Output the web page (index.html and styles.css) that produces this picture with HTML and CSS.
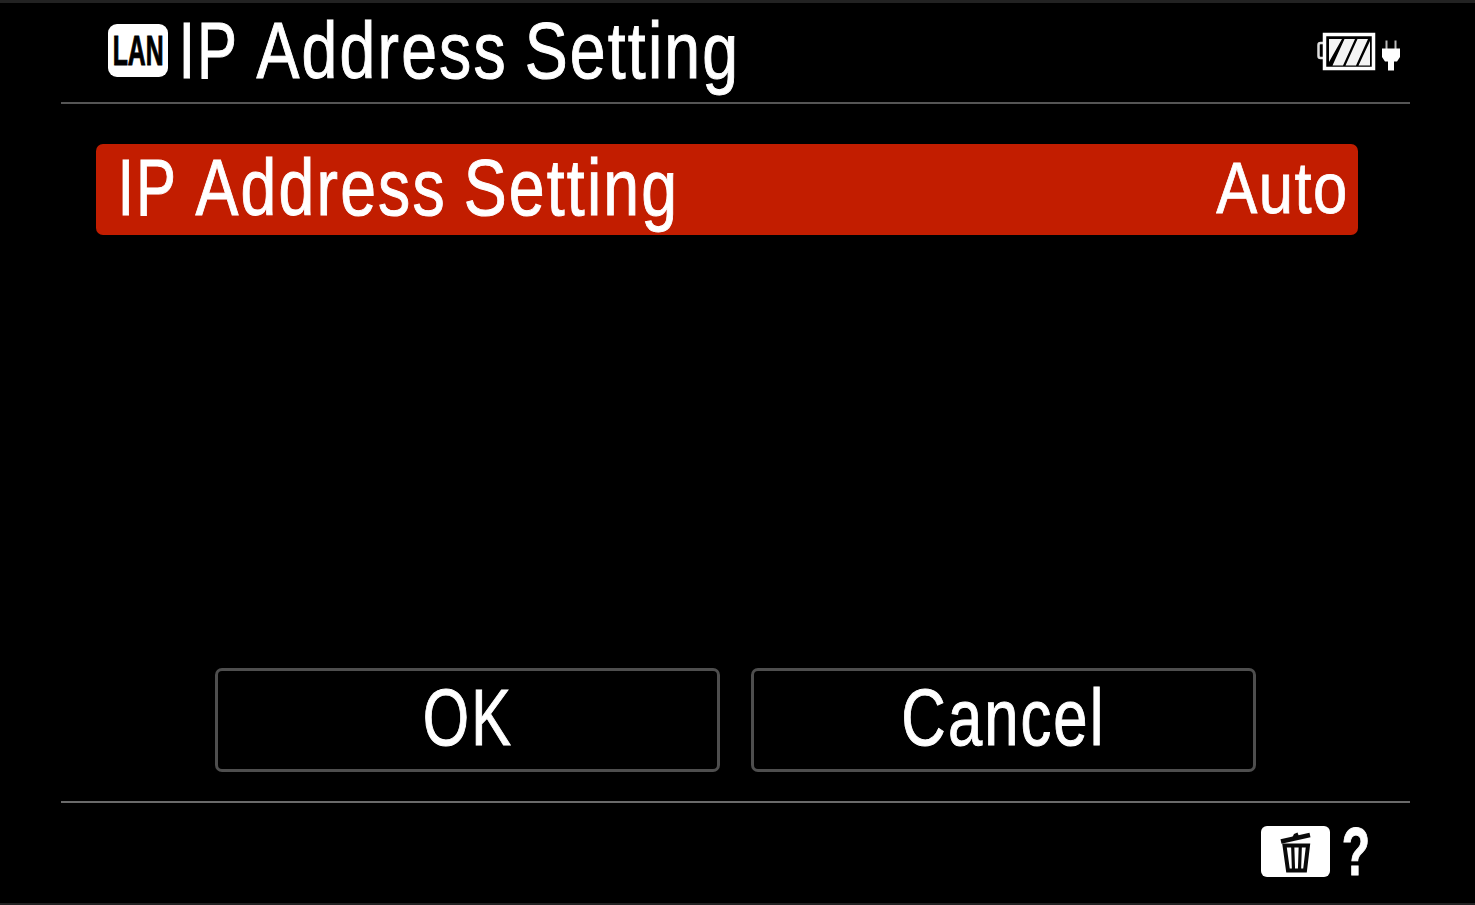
FILE: index.html
```html
<!DOCTYPE html>
<html lang="en">
<head>
<meta charset="utf-8">
<title>IP Address Setting</title>
<link rel="stylesheet" href="styles.css">
</head>
<body>
<div class="screen">
  <header class="header">
    <span class="lan"><span class="lan-text">LAN</span></span>
    <h1 class="title"><span class="ip">IP</span> Address Setting</h1>
    <svg class="power" width="88" height="42" viewBox="0 0 88 42">
      <path d="M8 12H4.500Q2.500 12 2.500 14V25Q2.500 27 4.500 27H8" fill="none" stroke="#ddd" stroke-width="2.500"/>
      <rect x="8.500" y="3.500" width="49" height="34" fill="none" stroke="#fff" stroke-width="3.500"/>
      <path d="M13 8H26L13 31ZM28.500 8H39L27 34.500H16.500ZM41.500 8H52L40 34.500H29.500ZM54 10V34.500H42.500Z" fill="#f4f4f4"/>
      <path d="M70.500 9.500V19M79.500 9.500V19" stroke="#bbb" stroke-width="2"/>
      <path d="M66 17.500H84V26L81 30.500H78V39.500H72V30.500H69L66 26Z" fill="#fff"/>
    </svg>
  </header>
  <main class="main">
    <div class="row">
      <span class="row-label"><span class="ip">IP</span> Address Setting</span>
      <span class="row-value">Auto</span>
    </div>
    <div class="buttons">
      <button class="button"><span class="button-text button-text-ok">OK</span></button>
      <button class="button"><span class="button-text">Cancel</span></button>
    </div>
  </main>
  <footer class="footer">
    <span class="trash">
      <svg width="32" height="44" viewBox="0 0 32 44">
        <path d="M1 11.500L30 5" stroke="#0a0a0a" stroke-width="4.500"/>
        <path d="M12 8L14 4L17.500 2.500L19 6.500Z" fill="#0a0a0a"/>
        <path d="M4.500 15.500H28L25 40.500H8Z" fill="none" stroke="#0a0a0a" stroke-width="4"/>
        <path d="M12.700 16L13.500 40M20.300 16L19.500 40" stroke="#0a0a0a" stroke-width="3.200"/>
      </svg>
    </span>
    <span class="help">?</span>
  </footer>
</div>
</body>
</html>
```
FILE: styles.css
```css
* { box-sizing: border-box; }
body { margin: 0; background: #000; color: #fff; font-family: "Liberation Sans", Arial, sans-serif; }
.screen {
  width: 1475px; height: 905px; padding: 0 65px 0 61px;
  border-top: 3px solid #222; border-bottom: 2px solid #222;
  display: flex; flex-direction: column; overflow: hidden;
}
.header {
  flex: none; height: 101px; padding-left: 47px; display: flex; align-items: flex-start;
  border-bottom: 2px solid #555;
}
.lan {
  flex: none; width: 60px; height: 53px; margin-top: 21px; border-radius: 9px; background: #fff; color: #000;
  display: flex; align-items: center; justify-content: center;
}
.lan-text {
  font-weight: bold; font-size: 42px; line-height: 53px;
  transform: scaleX(.59); -webkit-text-stroke: 1px #000;
}
.title, .row-label {
  flex: none; margin: 0; font-weight: 400; font-size: 80.500px; line-height: 80px; white-space: nowrap;
  letter-spacing: 2.700px; word-spacing: -4px; transform: scaleX(.8); transform-origin: 0 50%;
  -webkit-text-stroke: 1px #fff;
}
.ip { display: inline-block; transform: scaleX(.93); transform-origin: 8px 50%; }
.title { width: 560px; margin: 7px 0 0 10px; }
.power { flex: none; margin: 28px 6px 0 auto; }
.main { flex: none; height: 697px; padding: 40px 52px 0 35px; display: flex; flex-direction: column; }
.row {
  flex: none; height: 91px; padding: 0 9px 0 21px; border-radius: 7px; background: #c21d00;
  display: flex; justify-content: space-between;
}
.row-label { margin-top: 3px; width: 560px; }
.row-value {
  margin-top: 4px; font-size: 72.500px; line-height: 80px; letter-spacing: 1.600px;
  transform: scaleX(.85); transform-origin: 100% 50%; -webkit-text-stroke: .8px #fff;
}
.buttons { display: flex; gap: 31px; margin: 433px 0 0 119px; }
.button {
  flex: none; width: 505px; height: 104px; padding: 0; border: 3px solid #4e4e4e; border-radius: 7px;
  background: #000; color: #fff; font-family: inherit;
  display: flex; justify-content: center; align-items: flex-start;
}
.button-text {
  margin-top: 6px; font-size: 80.500px; line-height: 80px; letter-spacing: 2.700px;
  transform: scaleX(.765); -webkit-text-stroke: 1px #fff;
}
.button-text-ok { transform: scaleX(.74); }
.footer { flex: none; height: 102px; border-top: 2px solid #6a6a6a; padding: 23px 0 0 1200px; display: flex; align-items: flex-start; }
.trash {
  flex: none; width: 69px; height: 51px; border-radius: 6px; background: #fff;
  display: flex; justify-content: center; align-items: center;
}
.help {
  margin: -3px 0 0 5px; font-weight: bold; font-size: 68px; line-height: 56px;
  transform: scaleX(.68); -webkit-text-stroke: 1px #fff;
}
```
